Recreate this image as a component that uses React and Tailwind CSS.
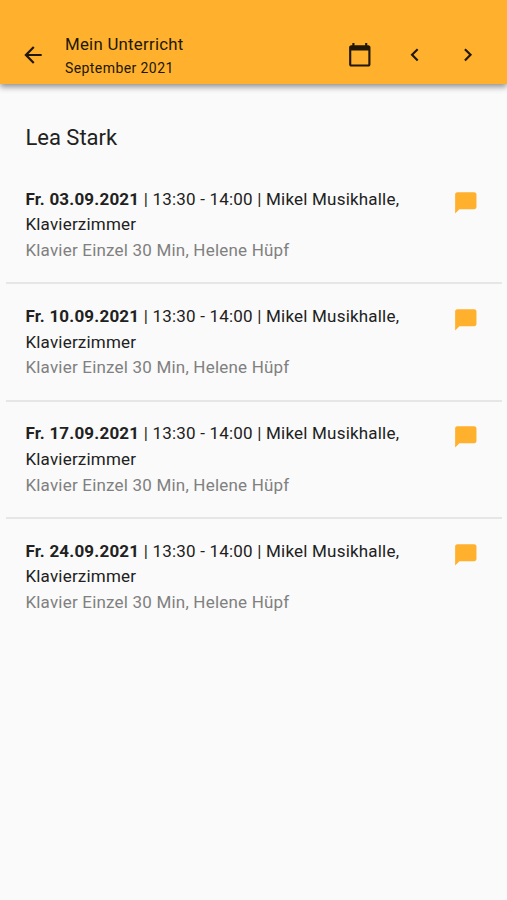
import React from "react";
import {
  MdArrowBack,
  MdCalendarToday,
  MdChevronLeft,
  MdChevronRight,
  MdChatBubble,
} from "react-icons/md";

const lessons = [
  { id: 1, date: "Fr. 03.09.2021" },
  { id: 2, date: "Fr. 10.09.2021" },
  { id: 3, date: "Fr. 17.09.2021" },
  { id: 4, date: "Fr. 24.09.2021" },
];

function Header() {
  return (
    <header className="flex h-[84px] items-end bg-[#ffb12e] pr-[26px] pb-[6px] pl-[20px] text-[#211705] shadow-[0_3px_6px_rgba(0,0,0,0.42)]">
      <button className="flex h-[46px] items-center">
        <MdArrowBack className="size-[26px]" />
      </button>
      <div className="-mb-[2px] ml-[19px] flex-1">
        <h1 className="text-[16.8px] leading-[24px] tracking-[0.27px]">Mein Unterricht</h1>
        <p className="text-[14px] leading-[24px] tracking-[0.42px]">September 2021</p>
      </div>
      <div className="flex h-[46px] items-center">
        <MdCalendarToday className="size-[25.6px]" />
        <MdChevronLeft className="ml-[29px] size-[25.6px]" />
        <MdChevronRight className="ml-[28px] size-[25.6px]" />
      </div>
    </header>
  );
}

function LessonRow({ lesson }) {
  return (
    <li className="flex h-[117.33px] items-start justify-between pt-[19.8px] pr-[23.4px] pl-[19.4px]">
      <div className="w-[390px] text-[17px] leading-[25.6px] tracking-[0.2px]">
        <p>
          <span className="font-bold">{lesson.date}</span> | 13:30 - 14:00 | Mikel Musikhalle, Klavierzimmer
        </p>
        <p className="text-[#808080]">Klavier Einzel 30 Min, Helene Hüpf</p>
      </div>
      <MdChatBubble className="mt-[3px] size-[25.6px] text-[#ffb12e]" />
    </li>
  );
}

export default function App() {
  return (
    <div className="h-[900px] w-[507px] overflow-hidden bg-[#fafafa] font-['Roboto',sans-serif] text-[#212121]">
      <Header />
      <main className="pr-[5px] pl-[6px]">
        <h2 className="pt-[38px] pl-[19.4px] text-[22px] leading-[32px]">Lea Stark</h2>
        <ul className="mt-[13px] divide-y-2 divide-[#e6e6e6]">
          {lessons.map((lesson) => (
            <LessonRow key={lesson.id} lesson={lesson} />
          ))}
        </ul>
      </main>
    </div>
  );
}
